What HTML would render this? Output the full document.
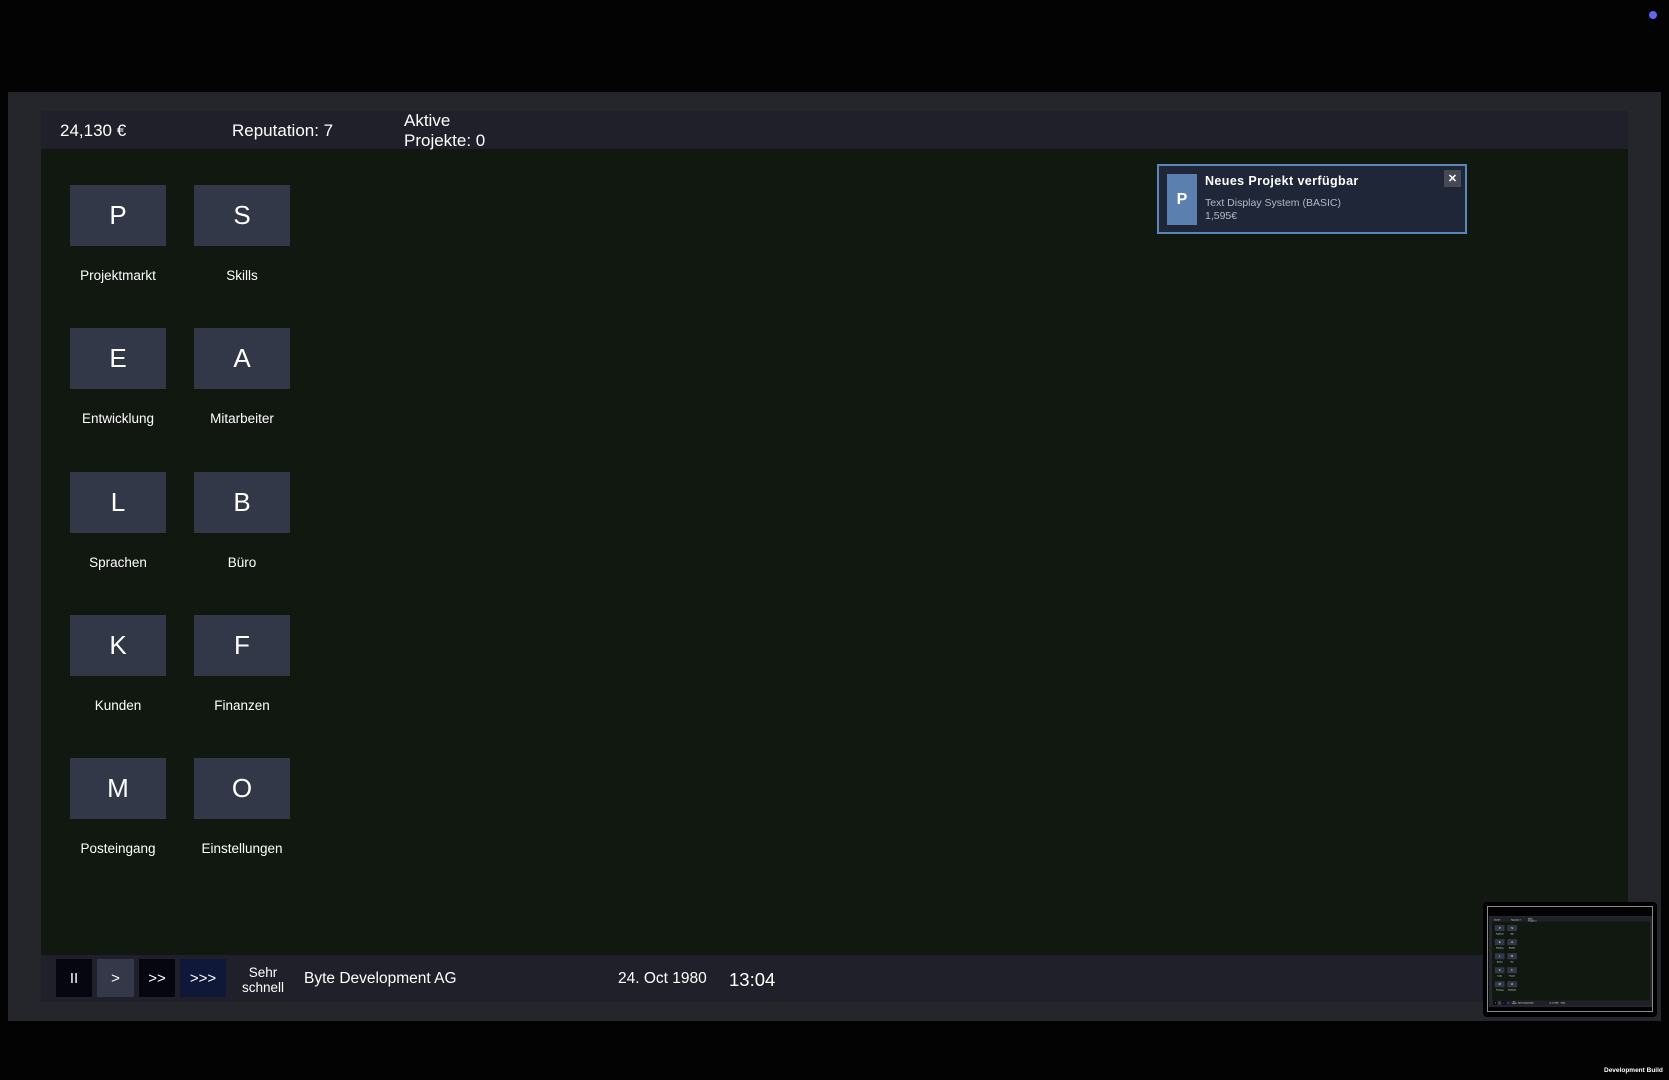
<!DOCTYPE html>
<html><head><meta charset="utf-8"><style>
*{margin:0;padding:0;box-sizing:border-box}
body{width:1669px;height:1080px;background:#030304;overflow:hidden;font-family:"Liberation Sans",Arial,sans-serif;color:#fff;position:relative}
.page{position:absolute;left:0;top:0;width:1669px;height:1080px;background:#030304}
.outer{position:absolute;left:8px;top:92px;width:1653px;height:929px;background:#25262b}
.head{position:absolute;left:41px;top:111px;width:1587px;height:38px;background:#1f2029}
.content{position:absolute;left:41px;top:149px;width:1587px;height:806px;background:#111810}
.foot{position:absolute;left:41px;top:955px;width:1587px;height:47px;background:#1f2029}
.t{position:absolute;white-space:nowrap}
.btn{position:absolute;width:96px;height:61px;background:#323847;font-size:26px;display:flex;align-items:center;justify-content:center}
.lbl{position:absolute;width:140px;text-align:center;font-size:13.5px}
.sb{position:absolute;top:959px;height:38px;display:flex;align-items:center;justify-content:center;font-size:15px}
</style></head><body>
<div class="page" id="main">
<div class="outer"></div>
<div class="head"></div>
<div class="content"></div>
<div class="foot"></div>
<div class="t" style="left:60px;top:121px;font-size:17px">24,130 €</div>
<div class="t" style="left:232px;top:121px;font-size:17px">Reputation: 7</div>
<div class="t" style="left:404px;top:111px;font-size:17px;line-height:20px">Aktive<br>Projekte: 0</div>

<div class="btn" style="left:70px;top:185px">P</div><div class="lbl" style="left:48px;top:268px">Projektmarkt</div>
<div class="btn" style="left:194px;top:185px">S</div><div class="lbl" style="left:172px;top:268px">Skills</div>
<div class="btn" style="left:70px;top:328px">E</div><div class="lbl" style="left:48px;top:411px">Entwicklung</div>
<div class="btn" style="left:194px;top:328px">A</div><div class="lbl" style="left:172px;top:411px">Mitarbeiter</div>
<div class="btn" style="left:70px;top:472px">L</div><div class="lbl" style="left:48px;top:555px">Sprachen</div>
<div class="btn" style="left:194px;top:472px">B</div><div class="lbl" style="left:172px;top:555px">Büro</div>
<div class="btn" style="left:70px;top:615px">K</div><div class="lbl" style="left:48px;top:698px">Kunden</div>
<div class="btn" style="left:194px;top:615px">F</div><div class="lbl" style="left:172px;top:698px">Finanzen</div>
<div class="btn" style="left:70px;top:758px">M</div><div class="lbl" style="left:48px;top:841px">Posteingang</div>
<div class="btn" style="left:194px;top:758px">O</div><div class="lbl" style="left:172px;top:841px">Einstellungen</div>

<div id="notif">
<div style="position:absolute;left:1157px;top:164px;width:310px;height:70px;background:#1f2638;border:2px solid #5a86b8"></div>
<div style="position:absolute;left:1167px;top:174px;width:30px;height:51px;background:#5b80b0;display:flex;align-items:center;justify-content:center;font-weight:bold;font-size:16px">P</div>
<div class="t" style="left:1205px;top:174px;font-size:12.5px;font-weight:bold;letter-spacing:0.4px">Neues Projekt verfügbar</div>
<div class="t" style="left:1205px;top:197px;font-size:10.5px;color:#b4b8c2">Text Display System (BASIC)</div>
<div class="t" style="left:1205px;top:210px;font-size:10.5px;color:#b4b8c2">1,595€</div>
<div style="position:absolute;left:1444px;top:170px;width:17px;height:17px;background:#474a55;font-size:11px;font-weight:bold;display:flex;align-items:center;justify-content:center">✕</div>
</div>

<div class="sb" style="left:56px;width:36px;background:#05060f">II</div>
<div class="sb" style="left:97px;width:37px;background:#343848">&gt;</div>
<div class="sb" style="left:139px;width:36px;background:#05060f">&gt;&gt;</div>
<div class="sb" style="left:180px;width:46px;background:#0f1838">&gt;&gt;&gt;</div>
<div class="t" style="left:233px;top:965px;width:60px;text-align:center;font-size:13.5px;line-height:15px">Sehr<br>schnell</div>
<div class="t" style="left:304px;top:970px;font-size:15.5px">Byte Development AG</div>
<div class="t" style="left:618px;top:970px;font-size:15.5px">24. Oct 1980</div>
<div class="t" style="left:729px;top:969px;font-size:18.5px">13:04</div>
</div>

<div style="position:absolute;left:1483px;top:902px;width:174px;height:115px;background:#000;border-radius:4px"></div>
<div style="position:absolute;left:1487px;top:906px;width:166px;height:106px;border:1.5px solid #8a8a8a;overflow:hidden">
 <div id="mini" style="position:absolute;left:0;top:0;width:1669px;height:1080px;transform:scale(0.0995,0.098);transform-origin:0 0"></div>
</div>

<div style="position:absolute;left:1649px;top:11px;width:8px;height:8px;border-radius:50%;background:#6366f1"></div>
<div class="t" style="left:1604px;top:1067px;font-size:6.5px;font-weight:bold">Development Build</div>
<script>
var c=document.getElementById('main').cloneNode(true);c.removeAttribute('id');
var n=c.querySelector('#notif');if(n)n.remove();
document.getElementById('mini').appendChild(c);
</script>
</body></html>
